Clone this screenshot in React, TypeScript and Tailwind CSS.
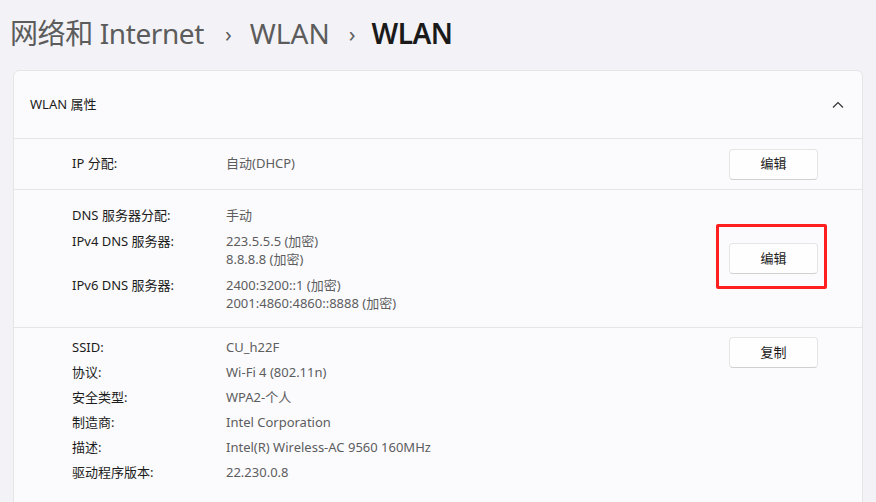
import React from "react";

const font = '"Noto Sans", "Noto Sans CJK SC", sans-serif';

function Btn({ label }: { label: string }) {
  return (
    <button className="w-[89px] h-[31px] rounded-[4px] bg-[#fefefe] border border-[#e5e5e5] border-b-[#d0d0d0] text-[13px] text-[#1b1b1b] flex items-center justify-center">
      {label}
    </button>
  );
}

export default function App() {
  const props = [
    ["SSID:", "CU_h22F"],
    ["协议:", "Wi-Fi 4 (802.11n)"],
    ["安全类型:", "WPA2-个人"],
    ["制造商:", "Intel Corporation"],
    ["描述:", "Intel(R) Wireless-AC 9560 160MHz"],
    ["驱动程序版本:", "22.230.0.8"],
  ];
  return (
    <div className="w-[876px] h-[502px] overflow-hidden bg-[#f3f3f7]" style={{ fontFamily: font }}>
      <div className="pt-[13px] pl-[10px] h-[53px] flex items-center text-[28px] leading-[40px]">
        <span className="text-[#5c5c5c] tracking-[-0.4px]">网络和 Internet</span>
        <span className="text-[#5c5c5c] text-[22px] ml-[21px] mr-[18px]">›</span>
        <span className="text-[#5c5c5c]">WLAN</span>
        <span className="text-[#5c5c5c] text-[22px] ml-[19px] mr-[16px]">›</span>
        <span className="text-[#1a1a1a] font-semibold tracking-[-0.5px]">WLAN</span>
      </div>
      <div className="mt-[17px] ml-[13px] w-[850px] bg-[#fbfbfd] border border-[#e5e5e5] rounded-t-[6px]">
        <div className="h-[68px] flex items-center justify-between pl-[16px] pr-[18px] border-b border-[#e5e5e5]">
          <span className="text-[13px] text-[#1b1b1b]">WLAN 属性</span>
          <svg width="12" height="8" viewBox="0 0 12 8" className="text-[#333]">
            <path d="M1 6.5 L6 1.5 L11 6.5" fill="none" stroke="currentColor" strokeWidth="1.2" />
          </svg>
        </div>
        <div className="h-[51px] flex items-center pl-[58px] pr-[44px] border-b border-[#e5e5e5] text-[13px]">
          <span className="w-[154px] text-[#1b1b1b]">IP 分配:</span>
          <span className="flex-1 text-[#5d5d5d]">自动(DHCP)</span>
          <Btn label="编辑" />
        </div>
        <div className="h-[138px] flex items-center pl-[58px] pr-[44px] border-b border-[#e5e5e5] text-[13px]">
          <div className="flex-1 flex flex-col gap-[8px] leading-[18px]">
            <div className="flex">
              <span className="w-[154px] text-[#1b1b1b]">DNS 服务器分配:</span>
              <span className="text-[#5d5d5d]">手动</span>
            </div>
            <div className="flex">
              <span className="w-[154px] text-[#1b1b1b]">IPv4 DNS 服务器:</span>
              <div className="flex flex-col text-[#5d5d5d]">
                <span>223.5.5.5 (加密)</span>
                <span>8.8.8.8 (加密)</span>
              </div>
            </div>
            <div className="flex">
              <span className="w-[154px] text-[#1b1b1b]">IPv6 DNS 服务器:</span>
              <div className="flex flex-col text-[#5d5d5d]">
                <span>2400:3200::1 (加密)</span>
                <span>2001:4860:4860::8888 (加密)</span>
              </div>
            </div>
          </div>
          <div className="relative">
            <Btn label="编辑" />
            <div className="absolute left-[-13px] top-[-19px] w-[111px] h-[65px] border-[3px] border-[#ff1f1f] rounded-[2px]" />
          </div>
        </div>
        <div className="flex pl-[58px] pr-[44px] pt-[7px] pb-[20px] text-[13px]">
          <div className="flex-1 flex flex-col leading-[25px]">
            {props.map(([k, v]) => (
              <div key={k} className="flex">
                <span className="w-[154px] text-[#1b1b1b]">{k}</span>
                <span className="text-[#5d5d5d]">{v}</span>
              </div>
            ))}
          </div>
          <div className="pt-[2px]">
            <Btn label="复制" />
          </div>
        </div>
      </div>
    </div>
  );
}
